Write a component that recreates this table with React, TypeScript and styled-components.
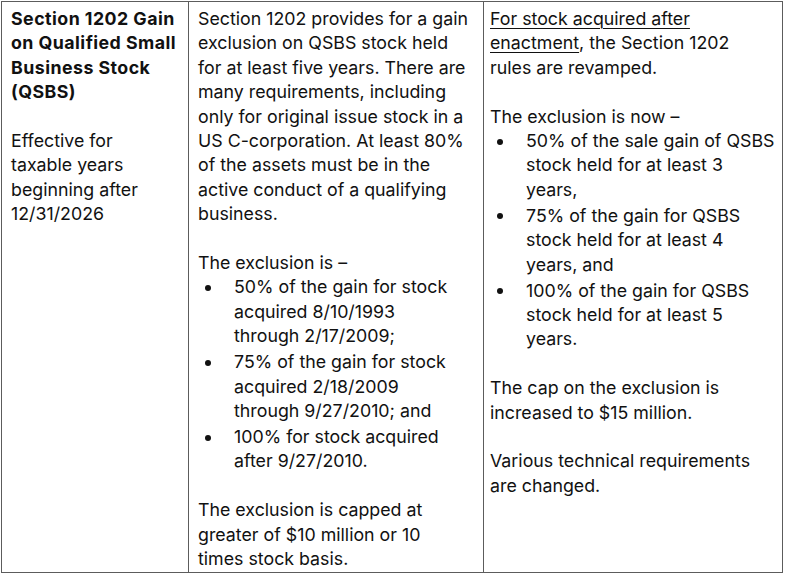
import React from "react";
import styled, { createGlobalStyle } from "styled-components";

const Global = createGlobalStyle`
  html, body { margin: 0; padding: 0; background: #ffffff; }
  body {
    font-family: "Inter", "Noto Sans", "Liberation Sans", sans-serif;
    color: #111111;
    -webkit-font-smoothing: antialiased;
  }
`;

const Page = styled.div`
  padding: 1px 0 0 1px;
`;

const Table = styled.div`
  display: grid;
  grid-template-columns: 187px 295px 298px;
  width: 782px;
  border: 1px solid #5c5c5c;
  box-sizing: border-box;
`;

const Cell = styled.div<{ $last?: boolean }>`
  padding: 5px 4px 0 ${(p) => (p.$last ? "6px" : "9px")};
  border-right: ${(p) => (p.$last ? "none" : "1px solid #5c5c5c")};
  font-size: 17.8px;
  line-height: 24.4px;
  white-space: nowrap;
`;

const Heading = styled.p`
  margin: 0;
  font-weight: 700;
  letter-spacing: 0.45px;
`;

const Para = styled.p`
  margin: 0;
`;

const Blank = styled.div`
  height: 24.4px;
`;

const List = styled.ul`
  margin: 0;
  padding: 0;
  list-style: none;
`;

const Item = styled.li`
  position: relative;
  padding-left: 36px;
  & + & {
    margin-top: 1.6px;
  }
  &::before {
    content: "";
    position: absolute;
    left: 7px;
    top: 9.5px;
    width: 6px;
    height: 6px;
    border-radius: 50%;
    background: #111111;
  }
`;

const Under = styled.span`
  text-decoration: underline;
  text-decoration-thickness: 1px;
  text-underline-offset: 3px;
`;

export default function App() {
  return (
    <Page>
      <Global />
      <Table>
        <Cell>
          <Heading>
            Section 1202 Gain
            <br />
            on Qualified Small
            <br />
            Business Stock
            <br />
            (QSBS)
          </Heading>
          <Blank />
          <Para>
            Effective for
            <br />
            taxable years
            <br />
            beginning after
            <br />
            12/31/2026
          </Para>
        </Cell>
        <Cell>
          <Para>
            Section 1202 provides for a gain
            <br />
            exclusion on QSBS stock held
            <br />
            for at least five years. There are
            <br />
            many requirements, including
            <br />
            only for original issue stock in a
            <br />
            US C-corporation. At least 80%
            <br />
            of the assets must be in the
            <br />
            active conduct of a qualifying
            <br />
            business.
          </Para>
          <Blank />
          <Para>The exclusion is –</Para>
          <List>
            <Item>
              50% of the gain for stock
              <br />
              acquired 8/10/1993
              <br />
              through 2/17/2009;
            </Item>
            <Item>
              75% of the gain for stock
              <br />
              acquired 2/18/2009
              <br />
              through 9/27/2010; and
            </Item>
            <Item>
              100% for stock acquired
              <br />
              after 9/27/2010.
            </Item>
          </List>
          <Blank />
          <Para>
            The exclusion is capped at
            <br />
            greater of $10 million or 10
            <br />
            times stock basis.
          </Para>
        </Cell>
        <Cell $last>
          <Para>
            <Under>For stock acquired after</Under>
            <br />
            <Under>enactment</Under>, the Section 1202
            <br />
            rules are revamped.
          </Para>
          <Blank />
          <Para>The exclusion is now –</Para>
          <List>
            <Item>
              50% of the sale gain of QSBS
              <br />
              stock held for at least 3
              <br />
              years,
            </Item>
            <Item>
              75% of the gain for QSBS
              <br />
              stock held for at least 4
              <br />
              years, and
            </Item>
            <Item>
              100% of the gain for QSBS
              <br />
              stock held for at least 5
              <br />
              years.
            </Item>
          </List>
          <Blank />
          <Para>
            The cap on the exclusion is
            <br />
            increased to $15 million.
          </Para>
          <Blank />
          <Para>
            Various technical requirements
            <br />
            are changed.
          </Para>
        </Cell>
      </Table>
    </Page>
  );
}
